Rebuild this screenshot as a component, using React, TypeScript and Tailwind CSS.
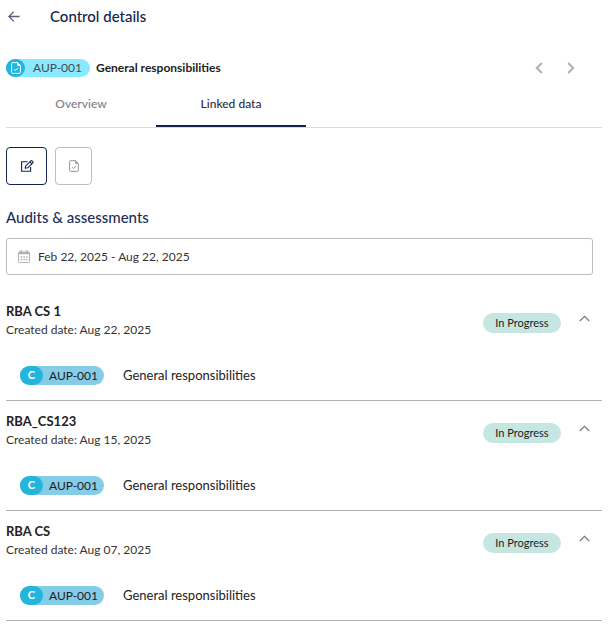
import React, { useState } from 'react';

interface Audit {
    id: number;
    name: string;
    createdDate: string;
    status: string;
    control: { code: string; title: string };
}

const control = { code: 'AUP-001', title: 'General responsibilities' };

const audits: Audit[] = [
    { id: 1, name: 'RBA CS 1', createdDate: 'Aug 22, 2025', status: 'In Progress', control },
    { id: 2, name: 'RBA_CS123', createdDate: 'Aug 15, 2025', status: 'In Progress', control },
    { id: 3, name: 'RBA CS', createdDate: 'Aug 07, 2025', status: 'In Progress', control },
];

const tabs = ['Overview', 'Linked data'];

const DocCheckIcon = ({ className }: { className?: string }) => (
    <svg viewBox="0 0 10 12" fill="none" stroke="currentColor" className={className} aria-hidden="true">
        <path d="M1.5 .6H6.4L9.4 3.5V10.4a1 1 0 0 1-1 1H1.5a.9.9 0 0 1-.9-1V1.5a.9.9 0 0 1 .9-.9Z" />
        <path d="M6.4 .6V3.5H9.4Z" fill="currentColor" strokeWidth=".5" />
        <path d="m3 7.1 1.5 1.5L7.2 5.8" />
    </svg>
);

const EditIcon = () => (
    <svg viewBox="0 0 14 12" fill="none" stroke="currentColor" className="h-3 w-3.5" aria-hidden="true">
        <path d="M7.5 1.8H1.6V11.3H10.6V7" strokeWidth="1.1" />
        <path d="m5.2 8.2.5-2.4L10.9.9a.8.8 0 0 1 1.1 0l.9.9a.8.8 0 0 1 0 1.1L7.7 7.8Z" strokeWidth="1.1" strokeLinejoin="round" />
        <path d="m9.9 1.9 2 2" strokeWidth="1.2" />
    </svg>
);

const CalendarIcon = () => (
    <svg viewBox="0 0 12 13" fill="none" stroke="currentColor" className="h-[13px] w-3 text-[#b0b0b0]" aria-hidden="true">
        <rect x=".5" y="2" width="11" height="10.5" rx=".8" />
        <path d="M.5 3.2H11.5" strokeWidth="2" />
        <path d="M3.2 0V3M8.8 0V3" strokeWidth="1.3" />
        <path d="M2.6 7H9.6M2.6 9.6H9.6" strokeWidth="1.3" strokeDasharray="1.6 1.1" />
    </svg>
);

const AuditItem: React.FC<{ audit: Audit }> = ({ audit }) => {
    const [open, setOpen] = useState(true);

    return (
        <li className="border-b border-[#b0b0b0] pt-[11px] pb-[15px]">
            <div className="flex items-start">
                <div className="flex-1 text-[#333]">
                    <h3 className="text-[13px] leading-[18px] font-bold text-[#222]">{audit.name}</h3>
                    <p className="text-[12px] leading-5">Created date: {audit.createdDate}</p>
                </div>
                <span className="mt-[11px] w-[78px] rounded-full bg-[#c6e6e2] text-center text-[11px] leading-5 text-[#1c1c1c]">
                    {audit.status}
                </span>
                <button
                    type="button"
                    aria-label={`Toggle ${audit.name}`}
                    aria-expanded={open}
                    onClick={() => setOpen(!open)}
                    className="mt-1 mr-3 ml-[18px] flex h-6 items-center text-[#777]"
                >
                    <svg viewBox="0 0 11 7" fill="none" stroke="currentColor" className={open ? 'h-[7px] w-[11px]' : 'h-[7px] w-[11px] rotate-180'} aria-hidden="true">
                        <path d="m.8 6 4.7-4.7L10.2 6" strokeWidth="1.1" />
                    </svg>
                </button>
            </div>
            {open && (
                <div className="mt-[26px] flex items-center pl-3.5">
                    <a href="#control" className="flex h-[19px] w-[84px] items-center rounded-full bg-[#85cce6] text-[12px] text-[#1c1c1c]">
                        <span className="flex h-full w-[23px] items-center justify-center rounded-full bg-[#24b5dd] text-[11px] font-bold text-white">C</span>
                        <span className="flex-1 text-center">{audit.control.code}</span>
                    </a>
                    <span className="ml-[19px] text-[13px] leading-[19px] text-[#222]">{audit.control.title}</span>
                </div>
            )}
        </li>
    );
};

const App: React.FC = () => {
    const [activeTab, setActiveTab] = useState('Linked data');

    return (
        <div className="min-h-screen bg-white pr-3.5 pl-1.5 font-['Lato',sans-serif] text-[#222]">
            <header className="flex h-8 items-center">
                <button type="button" aria-label="Back" className="w-11 pl-0.5 text-[#5b5f7d]">
                    <svg viewBox="0 0 12 11" fill="none" stroke="currentColor" className="h-[11px] w-3" aria-hidden="true">
                        <path d="M5.8 .6.9 5.5l4.9 4.9M1 5.5H11.6" strokeWidth="1.3" />
                    </svg>
                </button>
                <h1 className="text-[15px] font-medium text-[#14234b]">Control details</h1>
            </header>

            <main>
                <div className="mt-[26px] flex h-5 items-center">
                    <span className="flex h-[18px] w-[84px] items-center rounded-full bg-[#89e9ff] text-[12px] text-[#4a4a4a]">
                        <span className="flex h-full w-[19px] items-center justify-center rounded-full bg-[#24b5dd] text-white">
                            <DocCheckIcon className="h-3 w-2.5" />
                        </span>
                        <span className="flex-1 text-center">{control.code}</span>
                    </span>
                    <h2 className="ml-1.5 flex-1 text-[12px] font-bold">{control.title}</h2>
                    <div className="mr-[27px] flex gap-6 text-[#b0b0b0]">
                        <button type="button" aria-label="Previous control">
                            <svg viewBox="0 0 8 12" fill="none" stroke="currentColor" className="h-3 w-2" aria-hidden="true">
                                <path d="M6.8 1 1.8 6l5 5" strokeWidth="2" />
                            </svg>
                        </button>
                        <button type="button" aria-label="Next control">
                            <svg viewBox="0 0 8 12" fill="none" stroke="currentColor" className="h-3 w-2" aria-hidden="true">
                                <path d="m1.2 1 5 5-5 5" strokeWidth="2" />
                            </svg>
                        </button>
                    </div>
                </div>

                <div role="tablist" className="mt-1 flex border-b border-[#dcdcdc]">
                    {tabs.map(tab => (
                        <button
                            key={tab}
                            type="button"
                            role="tab"
                            aria-selected={tab === activeTab}
                            onClick={() => setActiveTab(tab)}
                            className={
                                tab === activeTab
                                    ? 'h-[45px] w-[150px] border-b-2 border-[#14234b] text-[12px] font-medium text-[#2b2b45]'
                                    : 'h-[45px] w-[150px] border-b-2 border-transparent text-[12px] font-medium text-[#808080]'
                            }
                        >
                            {tab}
                        </button>
                    ))}
                </div>

                <div className="mt-[19px] flex gap-2">
                    <button type="button" aria-label="Audits" className="flex h-[38px] w-[41px] items-center justify-center rounded border border-[#14234b] text-[#14234b]">
                        <EditIcon />
                    </button>
                    <button type="button" aria-label="Controls" className="flex h-[38px] w-[37px] items-center justify-center rounded border border-[#bdbdbd] text-[#999]">
                        <DocCheckIcon className="h-3 w-2.5" />
                    </button>
                </div>

                <h2 className="mt-[22px] text-[15px] leading-5 font-medium text-[#1a2f5a]">Audits &amp; assessments</h2>
                <label className="mt-[11px] mr-[9px] flex h-[37px] items-center gap-2 rounded-[3px] border border-[#bdbdbd] px-[11px]">
                    <CalendarIcon />
                    <input
                        type="text"
                        aria-label="Date range"
                        defaultValue="Feb 22, 2025 - Aug 22, 2025"
                        className="min-w-0 flex-1 text-[12px] text-[#333] outline-none"
                    />
                </label>

                <ul className="mt-4">
                    {audits.map(audit => (
                        <AuditItem key={audit.id} audit={audit} />
                    ))}
                </ul>
            </main>
        </div>
    );
};

export default App;
